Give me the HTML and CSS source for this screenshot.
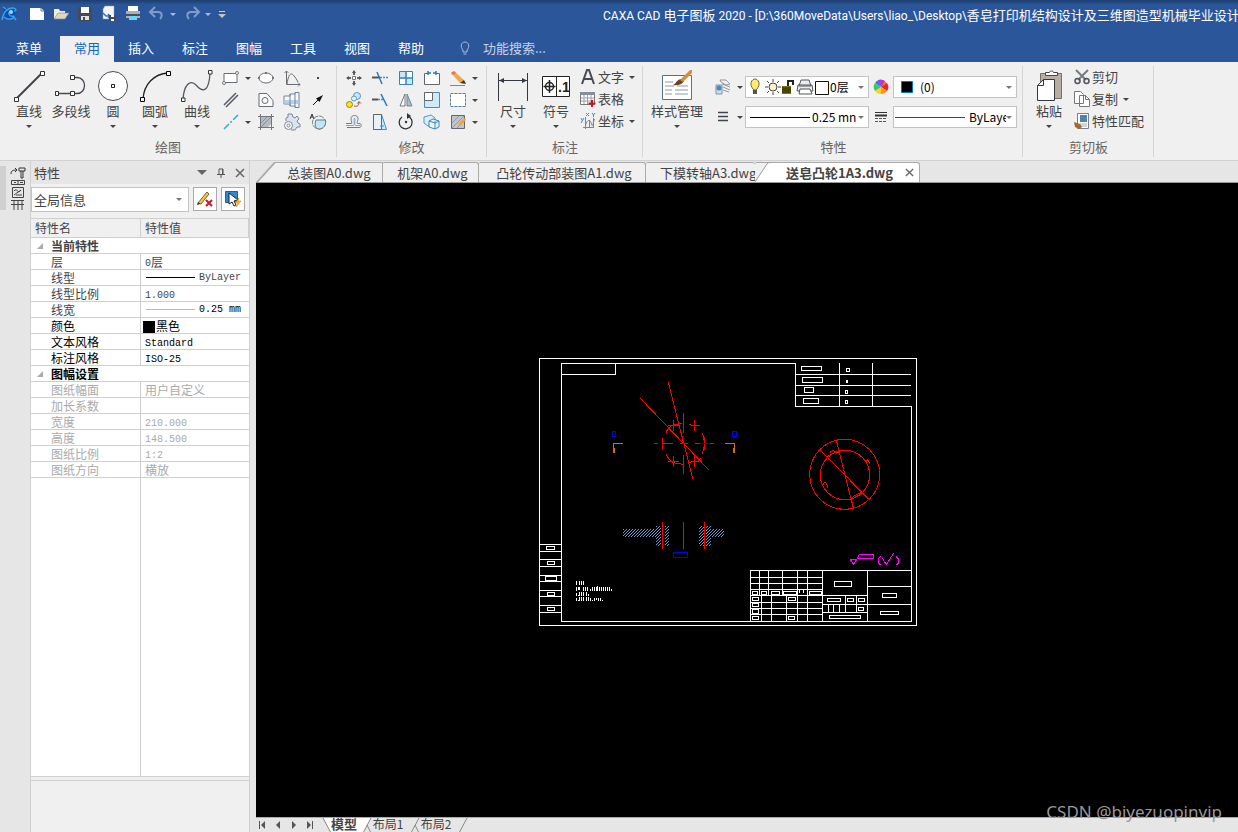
FILE: index.html
```html
<!DOCTYPE html>
<html lang="zh-CN">
<head>
<meta charset="utf-8">
<title>CAXA CAD 电子图板 2020</title>
<link rel="stylesheet" href="styles.css">
</head>
<body>
<div class="app">
<header class="titlebar">
  <div class="quick">
    <svg class="logo" viewBox="0 0 18 18"><path d="M2 2l5 2 8-2-1 8-4 4-6-1z" fill="#0b4fa8"/><path d="M1 15c1-6 4-12 11-12 3 0 4 3 1 3M5 4l-3-2M8 7c-1 3 2 5 5 4M3 12c3 3 8 3 10 0l2 3" fill="none" stroke="#35a2f2" stroke-width="1.500"/><circle cx="10" cy="7" r="2" fill="#9bdcff"/></svg>
    <button aria-label="新建"><svg viewBox="0 0 18 18"><path d="M2 3h11l3 3v9H2z" fill="#fff"/><path d="M13 3v3h3" fill="none" stroke="#777"/></svg></button>
    <button aria-label="打开"><svg viewBox="0 0 18 18"><path d="M2 14V4h5l1 2h5v2" fill="#f3efe6"/><path d="M2 14l4-6h11l-4 6z" fill="#ddd5c5" stroke="#8b8779" stroke-width=".6"/></svg></button>
    <button aria-label="保存"><svg viewBox="0 0 18 18"><path d="M2 2h14v14H3l-1-1z" fill="#444b56"/><path d="M5 2h8v6H5z" fill="#fff"/><path d="M5 11h8v4H5z" fill="#dfe3e8"/><path d="M7 12h2v3H7z" fill="#444b56"/></svg></button>
    <button aria-label="另存为"><svg viewBox="0 0 18 18"><path d="M5 1h9v13H3V4z" fill="#f5f5f5" stroke="#999" stroke-width=".5"/><path d="M3 8l3 3 4 0M8 9l2 2-2 2" fill="none" stroke="#2878c4" stroke-width="1.500"/><path d="M9 10h7v6H9z" fill="#444b56"/><path d="M11 10h3v2h-3zM11 14h3v2h-3z" fill="#fff"/></svg></button>
    <button aria-label="打印"><svg viewBox="0 0 18 18"><path d="M4 1h10v6H4z" fill="#fff"/><path d="M2 6h14v7H2z" fill="#aab0b6"/><path d="M2 9h14v2H2z" fill="#4a5058"/><path d="M5 11h8v4H5z" fill="#6bd5f5"/></svg></button>
    <button aria-label="撤销"><svg viewBox="0 0 18 18"><path d="M3 7h7c4 0 5 4 2 7M7 2L2 7l5 5" fill="none" stroke="#7f9cc8" stroke-width="2"/></svg></button><i class="caret light"></i>
    <button aria-label="重做"><svg viewBox="0 0 18 18"><path d="M15 7H8c-4 0-5 4-2 7M11 2l5 5-5 5" fill="none" stroke="#7f9cc8" stroke-width="2"/></svg></button><i class="caret light"></i>
    <button class="more" aria-label="自定义"><svg viewBox="0 0 8 10"><path d="M1 2.500h6" stroke="#ccd5e6"/><path d="M0 5h8L4 9z" fill="#c8c4bd"/></svg></button>
  </div>
  <h1 class="title">CAXA CAD <span>电子图板</span> 2020 - [D:\360MoveData\Users\liao_\Desktop\<span>香皂打印机结构设计及三维图造型机械毕业设计</span>C</h1>
</header>
<nav class="menu">
  <button class="file">菜单</button>
  <button class="on">常用</button><button>插入</button><button>标注</button><button>图幅</button><button>工具</button><button>视图</button><button>帮助</button>
  <label class="search"><svg width="10" height="14" viewBox="0 0 10 14"><path d="M3 9C0 6 1 1 5 1s5 5 2 8v2H3zM3.500 13h3" fill="none" stroke="#a9bddd"/></svg><input type="text" placeholder="功能搜索..." aria-label="功能搜索"></label>
</nav>

<section class="ribbon">
  <div class="group draw">
    <div class="tools">
      <button class="big"><svg viewBox="0 0 32 32"><path d="M4 28L28 4" stroke="#3f444e" stroke-width="2"/><g fill="#fff" stroke="#333"><path d="M1.500 27.500h4v4h-4zM27.500 1.500h4v4h-4z"/></g></svg><span>直线</span><i class="caret"></i></button>
      <button class="big"><svg viewBox="0 0 32 32"><path d="M2 23.500h16M18 7.500h4c10 0 10 16 0 16h-4" fill="none" stroke="#454a54" stroke-width="1.300"/><g fill="#fff" stroke="#333"><path d="M.5 21.500h3v4h-3zM15.500 21.500h4v4h-4zM15.500 5.500h4v4h-4z"/></g></svg><span>多段线</span></button>
      <button class="big"><svg viewBox="0 0 32 32"><circle cx="16" cy="16" r="14.500" fill="#fff" stroke="#454a54"/><path d="M14.500 14.500h3v3h-3z" fill="none" stroke="#222"/></svg><span>圆</span><i class="caret"></i></button>
      <button class="big"><svg viewBox="0 0 32 32"><path d="M4 29C5 14 15 4 29 3" fill="none" stroke="#222" stroke-width="1.300"/><g fill="#fff" stroke="#000"><path d="M1.500 27.500h4v4h-4zM27.500 1.500h4v4h-4z"/></g></svg><span>圆弧</span><i class="caret"></i></button>
      <button class="big"><svg viewBox="0 0 32 32"><path d="M2 29C3 15 9 9 15 15 22 23 28 22 29 3" fill="none" stroke="#555a64" stroke-width="1.300"/><g fill="#fff" stroke="#333"><path d="M.5 28h3.500v3.500H.5zM27.500.5h3.500V4h-3.500z"/></g></svg><span>曲线</span><i class="caret"></i></button>
      <div class="grid four">
        <button aria-label="矩形"><svg viewBox="0 0 18 18"><path d="M2 4.500h13v9H2z" fill="#fff" stroke="#686d76"/><circle cx="2" cy="14" r="1.500" fill="#fff" stroke="#777"/><circle cx="15" cy="4" r="1.500" fill="#fff" stroke="#777"/></svg><i class="caret"></i></button>
        <button aria-label="椭圆"><svg viewBox="0 0 18 18"><ellipse cx="9" cy="9" rx="7" ry="5" fill="#fff" stroke="#686d76"/><path d="M1 8h2v2H1zM15 8h2v2h-2zM8 3h2v2H8z" fill="#777"/></svg></button>
        <button aria-label="公式曲线"><svg viewBox="0 0 18 18"><path d="M3.500 2v13.500H17M4 15C6 2 9 2 15 13" fill="none" stroke="#686d76"/><path d="M1.500 4l2-2 2 2M15 13.500l2 2-2 2" fill="none" stroke="#777"/></svg></button>
        <button aria-label="点"><svg viewBox="0 0 18 18"><path d="M8 8h2v2H8z" fill="#444"/></svg></button>
        <button aria-label="平行线"><svg viewBox="0 0 18 18"><path d="M2 14L14 2M4 16L16 4" stroke="#555b66" stroke-width="1.500"/></svg></button>
        <button aria-label="轮廓"><svg viewBox="0 0 18 18"><path d="M2 2.500h8l6 7v6H2z" fill="#fafafa" stroke="#686d76"/><circle cx="8" cy="9.500" r="3" fill="none" stroke="#686d76"/></svg></button>
        <button aria-label="孔轴"><svg viewBox="0 0 18 18"><path d="M1 5h6V3h5V1.500h4v15h-4V15H7v-2H1z" fill="#f6f8fb" stroke="#74849a"/><path d="M1 9h15v4H1z" fill="#a8c7e8" opacity=".8"/><path d="M7 3v12M12 2v14" stroke="#74849a"/></svg></button>
        <button aria-label="箭头"><svg viewBox="0 0 18 18"><path d="M4 14l7-7" stroke="#111"/><path d="M14 4L7 7.500 10.500 11z" fill="#111"/></svg></button>
        <button aria-label="中心线"><svg viewBox="0 0 18 18"><path d="M2 16L16 2" stroke="#32a7de" stroke-width="1.500" stroke-dasharray="7 2 2 2"/></svg><i class="caret"></i></button>
        <button aria-label="剖面线"><svg viewBox="0 0 18 18"><path d="M4 4h10v7l-3 3H4z" fill="#b5bac2"/><path d="M3.500 1v16M14.500 1v16M1 3.500h16M1 14.500h16" stroke="#70757e"/><path d="M4 14l10-10M4 10l6-6" stroke="#777" stroke-width=".6"/></svg></button>
        <button aria-label="齿形"><svg viewBox="0 0 18 18"><path d="M3 8V5l2-1V1h4l1 3 2 1 2-2 2 3-2 2 1 2 2 1v3h-3l-2 3h-4" fill="#dde3ed" stroke="#7d8799"/><circle cx="5.500" cy="12.500" r="4" fill="#f8f8f8" stroke="#7d8799"/><circle cx="5.500" cy="12.500" r="1.500" fill="none" stroke="#7d8799"/></svg></button>
        <button aria-label="局部放大"><svg viewBox="0 0 18 18"><circle cx="10" cy="9.500" r="6.500" fill="none" stroke="#6d7884" stroke-dasharray="5 1"/><path d="M7 7h9.500c1 5-2 9-6.500 9-3 0-5-4-3-9z" fill="#bce6fb" stroke="#6d7884"/><path d="M0 6h5V0H0z" fill="#f0f0f0"/><path d="M1 6l2-5 2 5M2 4h2" fill="none" stroke="#333"/></svg></button>
      </div>
    </div>
    <div class="caption">绘图</div>
  </div>

  <div class="group edit">
    <div class="tools"><div class="grid five">
      <button aria-label="平移"><svg viewBox="0 0 18 18"><path d="M9 2v4M9 12v4M2 9h4M12 9h4" stroke="#333" stroke-width="1.500"/><path d="M7 4l2-3 2 3zM7 14l2 3 2-3zM4 7L1 9l3 2zM14 7l3 2-3 2z" fill="#555"/><path d="M7.500 7.500h3v3h-3z" fill="#fff" stroke="#777"/></svg></button>
      <button aria-label="裁剪"><svg viewBox="0 0 18 18"><path d="M1 8.500h8" stroke="#555" stroke-width="2"/><path d="M9 8.500h8" stroke="#3695d8" stroke-width="1.500" stroke-dasharray="2 1"/><path d="M6 3l5 12" stroke="#267abe" stroke-width="1.500"/></svg></button>
      <button aria-label="阵列"><svg viewBox="0 0 18 18"><path d="M2.500 2.500h13v13h-13z" fill="#c6e7fa" stroke="#3b82b5"/><path d="M3 10h6v5H3zM10 3h5v6h-5z" fill="#fff"/><path d="M9 2v14M2 9h14" stroke="#3b82b5" stroke-width="1.500"/></svg></button>
      <button aria-label="打断"><svg viewBox="0 0 18 18"><path d="M5 4.500H1.500v11h15v-11H13" fill="#fff" stroke="#60656e"/><path d="M5 2v4M13 2v4M5 4h3M13 4h-3" stroke="#267abe" stroke-width="1.500"/></svg></button>
      <button aria-label="删除"><svg viewBox="0 0 18 18"><path d="M2 4l3-2 10 9-4 3z" fill="#f0a947"/><path d="M2 4l3-2 2 2-3 2z" fill="#e97162"/><path d="M11 14l4-3 2 4z" fill="#333"/><path d="M1 16.500h15" stroke="#888"/></svg><i class="caret"></i></button>
      <button aria-label="平移复制"><svg viewBox="0 0 18 18"><circle cx="4.500" cy="13.500" r="3" fill="#ffe900" stroke="#90831b"/><circle cx="12" cy="5" r="3.500" fill="#c9e8fb" stroke="#5598ca"/><circle cx="9" cy="7.500" r="2.500" fill="#e5f4fd" stroke="#5598ca"/><path d="M9 15c4 1 5-1 5-4M12.500 12.500l1.500-2 2 2" fill="none" stroke="#9e4a40"/></svg></button>
      <button aria-label="延伸"><svg viewBox="0 0 18 18"><path d="M1 8.500h6" stroke="#555" stroke-width="2"/><path d="M7 8.500h5" stroke="#3695d8" stroke-width="1.500" stroke-dasharray="2 1"/><path d="M10 3l6 12" stroke="#267abe" stroke-width="1.500"/></svg></button>
      <button aria-label="镜像"><svg viewBox="0 0 18 18"><path d="M8 3v12H3z" fill="#fff" stroke="#777"/><path d="M10 3v12h5z" fill="#a5bdcf" stroke="#6f8798"/></svg></button>
      <button aria-label="缩放"><svg viewBox="0 0 18 18"><path d="M1.500 1.500h15v15h-15z" fill="#cceafa" stroke="#5688ad"/><path d="M1.500 1.500h8v8h-8z" fill="#fff" stroke="#666"/></svg></button>
      <button aria-label="选择"><svg viewBox="0 0 18 18"><path d="M1.500 2.500h15v13h-15z" fill="#fff" stroke="#557f9d" stroke-dasharray="3 1"/></svg><i class="caret"></i></button>
      <button aria-label="等距线"><svg viewBox="0 0 18 18"><path d="M1 10.500h5c2 0 0-2 0-5 0-4 7-4 7 0 0 3-2 5 0 5h1c3 0 3 4 0 4H2" fill="none" stroke="#747982"/><path d="M1 12.500h7c2 0 1-4 1-7h1c0 3-1 7 1 7h4" fill="none" stroke="#7ca9c7"/></svg></button>
      <button aria-label="拉伸"><svg viewBox="0 0 18 18"><path d="M2.500 1.500h8l5 15h-13z" fill="#c9e9fb" stroke="#3b91cf"/><path d="M10.500 16.500h-8v-15h8z" fill="#e8f1f7" stroke="#666"/><path d="M9 13h4" stroke="#3b91cf"/></svg></button>
      <button aria-label="旋转"><svg viewBox="0 0 18 18"><path d="M10 3A6.500 6.500 0 1 1 5 4" fill="none" stroke="#30343b" stroke-width="1.300"/><path d="M10 0v6l4-3z" fill="#30343b"/><circle cx="9" cy="9" r="1.200" fill="#333"/></svg></button>
      <button aria-label="分解"><svg viewBox="0 0 18 18"><path d="M1 4l7-2 4 3v6l-7 2-4-3z" fill="#d8eefa" stroke="#529acb"/><path d="M6 8l4-2 6 2v6l-4 2-6-2zM6 8l6 2 4-2M12 10v6" fill="#e8f5fc" stroke="#3f87b9"/></svg></button>
      <button aria-label="编辑填充"><svg viewBox="0 0 18 18"><path d="M2.500 2.500h13v13h-13z" fill="#c2c4c9" stroke="#63676f"/><path d="M3 15L15 3M3 10l7-7M8 15l7-7" stroke="#888" stroke-width=".7"/><path d="M9 13l1-3 6-5 1 2-5 5z" fill="#eba43f"/></svg><i class="caret"></i></button>
    </div></div>
    <div class="caption">修改</div>
  </div>

  <div class="group note">
    <div class="tools">
      <button class="big"><svg viewBox="0 0 32 32"><path d="M1.500 3v28M30.500 3v28" stroke="#333842"/><path d="M2 10.500h28" stroke="#333842"/><path d="M2 10.500l5-2.500v5zM30 10.500L25 8v5z" fill="#333842"/></svg><span>尺寸</span><i class="caret"></i></button>
      <button class="big"><svg viewBox="0 0 32 32"><path d="M2.500 6.500h27v20h-27zM16.500 6.500v20" fill="#fff" stroke="#222"/><circle cx="9.500" cy="16.500" r="4" fill="none" stroke="#222" stroke-width="1.500"/><path d="M3.500 16.500h12M9.500 10v13" stroke="#222" stroke-width="1.500"/><text x="18" y="22" class="sym">.1</text></svg><span>符号</span><i class="caret"></i></button>
      <div class="list">
        <button><svg viewBox="0 0 18 18"><path d="M3 16L8 2h2l5 14M5 11h8" fill="none" stroke="#454a54" stroke-width="2"/></svg>文字<i class="caret"></i></button>
        <button><svg viewBox="0 0 18 18"><path d="M1.500 2.500h14v12h-14z" fill="#fff" stroke="#777"/><path d="M1 2h15v3H1z" fill="#888e98"/><path d="M5 5v9M8.500 5v9M12 5v9M2 8h13M2 11h13" stroke="#9a9faa"/><path d="M13 10v7M9.500 13.500h7" stroke="#c1172a" stroke-width="2"/></svg>表格</button>
        <button><svg viewBox="0 0 18 18"><path d="M6.500 5v12M4 15.500h11M6.500 13c2-6 5-6 6-1s2-3 3-5M10.500 8v8M14.500 6v10" fill="none" stroke="#7c8590"/><path d="M2 6l1.500 3M5 6l-3 5M7 1l3 3M10 1L7 4M13 1l1.500 2L16 1M14.500 3v2" fill="none" stroke="#3b91cf"/></svg>坐标<i class="caret"></i></button>
      </div>
    </div>
    <div class="caption">标注</div>
  </div>

  <div class="group props">
    <div class="tools">
      <button class="big wide"><svg viewBox="0 0 32 32"><path d="M1.500 5.500h29v24h-29z" fill="#fff" stroke="#587189"/><path d="M4 12h8M4 16h9M4 20h7M4 24h7M16 16h11M14 20h13M14 24h13" stroke="#879cac"/><path d="M12 15c3-1 3-5 8-6l3 2c-2 4-7 5-11 4z" fill="#6d4526"/><path d="M19 10L29 0h2v3l-9 9z" fill="#d88c3d"/></svg><span>样式管理</span><i class="caret"></i></button>
      <div class="fields">
        <button aria-label="图层"><svg viewBox="0 0 18 18"><path d="M6 2h6l4 4-4 1-5-3zM8 6l8 3M9 9l7 3M9 12l6 2" fill="#eef0f3" stroke="#9299a3"/><path d="M2 7h6v9H2z" fill="#ccdfea" stroke="#82909d"/><circle cx="5" cy="10" r="2.500" fill="#448bbb"/></svg><i class="caret"></i></button>
        <div class="combo">
          <svg class="layer" viewBox="0 0 80 18"><path d="M4 12c-6-6-2-11 1-11s7 5 1 11z" fill="#ffea75" stroke="#776629"/><path d="M3 12h4v4H3z" fill="#555"/><circle cx="23" cy="9" r="4" fill="#fff4c9" stroke="#444"/><path d="M23 1v3M23 14v3M15 9h3M28 9h3M17 3l2 2M27 13l2 2M17 15l2-2M27 5l2-2" stroke="#444"/><path d="M32 8h9v8h-9z" fill="#7b7b00"/><path d="M32 10h9M32 12h9M32 14h9" stroke="#111"/><path d="M38 8V3h5v4" fill="none" stroke="#222" stroke-width="2"/><path d="M51 2h8l2 6H49zM48 7h14l1 6H47z" fill="#e8edf2" stroke="#555"/><path d="M50 11h10l2 5H49z" fill="#fff" stroke="#555"/><path d="M65.500 3.500h13v13h-13z" fill="#fff" stroke="#111"/></svg>
          <select aria-label="当前图层"><option>0层</option></select><i class="caret"></i></div>
        <svg class="wheel" viewBox="0 0 18 18"><path d="M9 9V2a7 7 0 0 1 6 4z" fill="#f47a2d"/><path d="M9 9l6-4a7 7 0 0 1 0 8z" fill="#ee2525"/><path d="M9 9l6 4a7 7 0 0 1-6 3z" fill="#ff9a21"/><path d="M9 9v7a7 7 0 0 1-6-3z" fill="#ffcf2d"/><path d="M9 9l-6 4a7 7 0 0 1 0-8z" fill="#42c767"/><path d="M9 9L3 5a7 7 0 0 1 4-3z" fill="#3a7de9"/><path d="M9 9L6 2a7 7 0 0 1 7 1z" fill="#b735e1"/></svg>
        <div class="combo"><svg class="chip" viewBox="0 0 12 12"><path d="M.5.5h11v11H.5z" fill="#000" stroke="#0078d7"/></svg><select aria-label="颜色"><option>(0)</option></select><i class="caret"></i></div>
        <button aria-label="线宽设置"><svg viewBox="0 0 18 18"><path d="M4 4.500h10M4 8.500h10M4 12.500h10" stroke="#3f444e" stroke-width="1.500"/></svg><i class="caret"></i></button>
        <div class="combo"><span class="stroke"></span><select aria-label="线宽"><option>0.25 mn</option></select><i class="caret"></i></div>
        <svg class="wheel" viewBox="0 0 18 18"><path d="M3 4.500h12" stroke="#333"/><path d="M3 7.500h12" stroke="#333" stroke-width="2"/><path d="M3 10.500h12M3 13.500h12" stroke="#555" stroke-dasharray="3 1"/></svg>
        <div class="combo"><span class="stroke crimson"></span><select aria-label="线型"><option>ByLaye</option></select><i class="caret"></i></div>
      </div>
    </div>
    <div class="caption">特性</div>
  </div>

  <div class="group clip">
    <div class="tools">
      <button class="big"><svg viewBox="0 0 32 32"><path d="M7.500 3.500h21v25h-21z" fill="#b7ae9f" stroke="#777064"/><path d="M12.500 5.500v-3h4c0-2 4-2 4 0h4v3z" fill="#fff" stroke="#3f444e"/><path d="M10.500 9.500h11v21h-17v-15z" fill="#fff" stroke="#333842"/><path d="M10.500 9.500v6h-6" fill="none" stroke="#333842"/></svg><span>粘贴</span><i class="caret"></i></button>
      <div class="list">
        <button><svg viewBox="0 0 18 18"><path d="M3 2l10 10M15 2L5 12" stroke="#777c84" stroke-width="2"/><circle cx="4.500" cy="13" r="2.500" fill="none" stroke="#50555d" stroke-width="1.500"/><circle cx="13.500" cy="13" r="2.500" fill="none" stroke="#50555d" stroke-width="1.500"/></svg>剪切</button>
        <button><svg viewBox="0 0 18 18"><path d="M1.500 1.500h6l3 3v9h-9zM6.500 5.500h6l4 4v7h-10z" fill="#fff" stroke="#777"/><path d="M12.500 5.500v4h4" fill="none" stroke="#777"/></svg>复制<i class="caret"></i></button>
        <button><svg viewBox="0 0 18 18"><path d="M4.500 1.500h11v15h-11z" fill="#fff" stroke="#77818c"/><path d="M7 3h7v7H7z" fill="#4e85b0"/><path d="M7 12h7M7 14h7" stroke="#aaa"/><path d="M1 10l6 2 2 3-3 2-4-2z" fill="#a8652d"/></svg>特性匹配</button>
      </div>
    </div>
    <div class="caption">剪切板</div>
  </div>
</section>

<main class="work">
  <aside class="dock"><button aria-label="图库"><svg viewBox="0 0 16 46"><path d="M1 8c0-4 3-4 6-4M5 2l2 2-2 2M9 2h6v3H9zM11 5v7h2V5" fill="none" stroke="#333"/><path d="M1.500 14.500h13v4h-13zM4 16.500h2M8 15v3M10 16.500h3M2.500 21.500h11v10h-11zM4 25c3-4 4 4 7-1M4 29l7-5M6 29h6M1 34.500h13M1 38.500h13M4 34v10M8 34v10M12 34v10" fill="none" stroke="#444"/></svg></button></aside>
  <aside class="panel">
    <div class="phead"><h2>特性</h2><button aria-label="选项"><i class="caret large"></i></button><button aria-label="固定"><svg viewBox="0 0 10 10"><path d="M3 1h4v5M3 1v5M1 6.500h8M5 7v3M6.500 1v5" fill="none" stroke="#555"/></svg></button><button aria-label="关闭"><svg viewBox="0 0 10 10"><path d="M1 1l8 8M9 1L1 9" stroke="#666" stroke-width="1.500"/></svg></button></div>
    <div class="pick">
      <div class="combo"><select aria-label="对象"><option>全局信息</option></select><i class="caret"></i></div>
      <button aria-label="清除选择"><svg viewBox="0 0 18 18"><path d="M2 13L11 2l2 2L5 14z" fill="#f1c645" stroke="#7b6225"/><path d="M1 15l1-3 2 2z" fill="#222"/><path d="M10 10l6 6M16 10l-6 6" stroke="#cb1729" stroke-width="2"/></svg></button>
      <button aria-label="快速选择"><svg viewBox="0 0 18 18"><path d="M1.500 1.500h12v11h-12z" fill="#2f86d3" stroke="#17649e"/><path d="M5 3v11l3-2 2 4 2-1-2-4 4-1z" fill="#fff" stroke="#222"/><path d="M15 8l-4 5h3l-2 4 5-6h-3z" fill="#ffba20" stroke="#ce7a00" stroke-width=".5"/></svg></button>
    </div>
    <div class="sheet">
      <table>
        <thead><tr><th scope="col">特性名</th><th scope="col">特性值</th></tr></thead>
        <tbody>
          <tr class="sec"><td colspan="2"><i></i>当前特性</td></tr>
          <tr><td>层</td><td><b>0</b>层</td></tr>
          <tr><td>线型</td><td><div class="line"><span></span><b>ByLayer</b></div></td></tr>
          <tr><td>线型比例</td><td><b>1.000</b></td></tr>
          <tr><td>线宽</td><td class="dark"><div class="line pale"><span></span><b>0.25 mm</b></div></td></tr>
          <tr class="dark"><td>颜色</td><td class="swatch"><i></i>黑色</td></tr>
          <tr class="dark"><td>文本风格</td><td><b>Standard</b></td></tr>
          <tr class="dark"><td>标注风格</td><td><b>ISO-25</b></td></tr>
          <tr class="sec dark"><td colspan="2"><i></i>图幅设置</td></tr>
          <tr class="off"><td>图纸幅面</td><td>用户自定义</td></tr>
          <tr class="off"><td>加长系数</td><td></td></tr>
          <tr class="off"><td>宽度</td><td><b>210.000</b></td></tr>
          <tr class="off"><td>高度</td><td><b>148.500</b></td></tr>
          <tr class="off"><td>图纸比例</td><td><b>1:2</b></td></tr>
          <tr class="off"><td>图纸方向</td><td>横放</td></tr>
        </tbody>
      </table>
    </div>
    <div class="desc"></div>
  </aside>

  <section class="docs">
    <div class="doctabs">
      <button class="t1">总装图A0.dwg</button><button class="t2">机架A0.dwg</button><button class="t3">凸轮传动部装图A1.dwg</button><button class="t4">下模转轴A3.dwg</button>
      <button class="cur"><svg class="slant" viewBox="0 0 16 20"><path d="M0 20L12 2q1-2 3-2h1v20z" fill="#fff"/><path d="M0 20L12 2q1-1.500 3-1.500h1" fill="none" stroke="#999"/></svg><span>送皂凸轮1A3.dwg</span><svg class="x" viewBox="0 0 10 10"><path d="M1 1l8 8M9 1L1 9" stroke="#666" stroke-width="1.500"/></svg></button>
    </div>
    <div class="canvas">
      <svg class="sheetdraw" viewBox="0 0 1134 804">
        <defs><pattern id="hatch" width="9" height="9" patternUnits="userSpaceOnUse"><path d="M0 6h3v3H0zM3 3h3v3H3zM6 0h3v3H6z" fill="#6d98d0"/></pattern></defs>
        <g transform="translate(-12 -12)" class="ln">
          <path d="M13 13H1145V814H13z"/>
          <path d="M780 28H79V802H1130M79 61H241V28M13 571H79M13 592H79M13 616H79M13 637H79M13 664H79M13 682H79M13 709H79M13 727H79M13 754H79M13 775H79"/>
          <path d="M34 577H59V586H34zM37 622H59V631H37zM31 667H65V679H31zM37 715H59V724H37zM37 760H59V769H37z"/>
          <path d="M124 681v12M133 681v12M139 681v12M145 681v12M124 699v12M130 709v-10h4v10M145 699v12M151 699v12M157 699v12M166 706v5M172 699v12M178 699v12M184 699v12M187 696v15M193 699v12M199 699v12M205 699v12M211 699v12M217 699v12M223 699v12M229 705v6M124 717v9M130 724h4v-10M139 714v12M145 714v12M154 714v12M160 720v6M124 732v9M130 739h4v-10M139 729v12M145 729v12M154 729v12M160 729v12M166 732v9M172 738v3M178 732v9M184 738v-6M190 732v9M196 732v9M202 737v4"/>
          <g class="red">
            <path d="M316 133L521 347M400 85L473 374M445 178V236M445 304V359M357 268H368M381 268H413M435 268H458M480 268H495M525 268H537M382 252V285M508 250V287"/>
            <path d="M393 236q7-18 22-23l15-3 12-3M393 300q11 24 28 27l23 4M502 237q12 31 0 62M415 198V231M400 213H434M479 198V231M463 210l7 5h24M415 306V339M400 322H432M479 306V339M460 327l14-5h16l6-9"/>
            <path d="M382 504V584M445 504V584M508 504V584"/>
          </g>
          <path class="blue" d="M232 232H242V247H232zM592 232H604V247H592zM495 268H525M415 595H458V611H415z"/>
          <path class="orange" d="M264 268H235V296M238 283V296M570 268H598V296M595 283V296"/>
          <path class="hatch" d="M264 525H363V516H378V575H363V549H264zM390 516H402V575H390zM492 516H507V575H492zM513 516H528V525H567V549H528V575H513z"/>
        </g>
        <g transform="translate(573 -12)" class="ln">
          <path d="M196 28V157H545V802M328 28V157M427 28V157M196 61H543M196 94H543M196 124H543"/>
          <path d="M214 37H275V49H214zM217 70H278V86H217zM223 100H251V116H223zM220 133H266V149H220zM349 43H359V53H349zM349 79H352V86H349zM346 109H353V119H346zM346 139H353V149H346z"/>
          <path d="M61 802V649H545M61 670H278M61 688H278M61 706H278M61 724H412M61 745H278M61 763H278M61 781H278M88 649V724M115 649V724M157 649V724M202 649V802M232 649V802M94 724V802M124 724V802M169 724V802M278 649V802M412 649V802M412 697H545M412 751H545M278 751H412M278 775H412M346 724V775M379 724V775M295 751V775M310 751V775M328 751V775M208 708V717M221 708V717"/>
          <path d="M313 682H365V697H313zM457 718H500V730H457zM451 772H506V781H451zM292 733H332V742H292zM352 733H370V742H352zM385 733H404V742H385zM385 760H401V769H385zM298 784H392V794H298zM67 712H83V721H67zM94 712H110V721H94zM124 712H149V721H124zM160 712H200V721H160zM238 712H275V721H238zM67 731H86V740H67zM175 731H197V740H175zM67 748H86V757H67zM67 767H86V779H67zM67 787H86V796H67zM175 787H194V796H175z"/>
          <g class="red"><circle cx="344" cy="361" r="105"/><circle cx="345" cy="363" r="74"/><path d="M270 287L418 438M319 260L371 465M289 309l12-6M299 296l10-7 8 5h12M407 323l7-6 7 14M281 393q-1-13 9-4l3 13M363 435q6-8 15-12l17-9M372 430l17-7"/></g>
          <path class="pink" d="M361 616H380L371 632zM380 616L388 601H431V613H383M452 606L446 613V628L452 634M457 612L469 632L492 596M499 608L506 615V627L499 634"/>
          <path class="blue" d="M7 232H20V247H7z"/>
        </g>
      </svg>
    </div>
    <div class="layouts">
      <button aria-label="第一个"><svg viewBox="0 0 10 10"><path d="M2.500 1v8" stroke="#555"/><path d="M8 1v8L4 5z" fill="#555"/></svg></button>
      <button aria-label="上一个"><svg viewBox="0 0 10 10"><path d="M7 1v8L3 5z" fill="#555"/></svg></button>
      <button aria-label="下一个"><svg viewBox="0 0 10 10"><path d="M3 1v8l4-4z" fill="#555"/></svg></button>
      <button aria-label="最后一个"><svg viewBox="0 0 10 10"><path d="M7.500 1v8" stroke="#555"/><path d="M2 1v8l4-4z" fill="#555"/></svg></button>
      <div class="ltabs"><svg class="edges" viewBox="0 0 150 15"><path d="M2 0h48l-8 15H10z" fill="#fff"/><path d="M2 0l8 15M50 0l-8 15M46 7l4 8M98 0l-8 15M94 7l4 8M146 0l-8 15" fill="none" stroke="#888"/></svg><button class="act">模型</button><button>布局1</button><button>布局2</button></div>
    </div>
  </section>
</main>
<div class="mark">CSDN @biyezuopinvip</div>
</div>
</body>
</html>
```
FILE: styles.css
```css
* { box-sizing: border-box; }
body { margin: 0; font: 13px/18px "Noto Sans CJK SC", "Noto Sans", sans-serif; color: #444; background: #e6e6e6; }
button, input, select { font: inherit; color: inherit; border: 0; padding: 0; margin: 0; background: none; }
select { appearance: none; outline: 0; }
svg { display: block; flex: none; }
h1, h2 { margin: 0; font: inherit; }
.app { position: relative; display: flex; flex-direction: column; height: 100vh; overflow: hidden; }
.caret { flex: none; width: 0; height: 0; border: 3px solid transparent; border-top-color: #444; border-bottom: 0; }
.caret.light { border-top-color: #a9bbd8; }
.caret.large { border-width: 5px 5px 0; border-top-color: #666; }

.titlebar { display: flex; flex: none; align-items: center; height: 28px; color: #fff; background: linear-gradient(#1d3d6e, #2b579a 5px); overflow: hidden; }
.quick { display: flex; flex: none; align-items: center; width: 603px; padding-left: 1px; }
.quick svg { width: 18px; height: 18px; }
.quick button { width: 24px; padding-left: 3px; }
.quick .logo { margin-right: 6px; }
.quick .caret { margin: 0 4px 0 1px; }
.quick .more svg { width: 8px; height: 10px; }
.title { flex: none; white-space: nowrap; padding-top: 4px; font: 12px/18px Roboto, "Noto Sans CJK SC", sans-serif; }
.title span { font-size: 13px; }

.menu { display: flex; flex: none; align-items: flex-end; height: 35px; color: #fff; background: #2b579a; border-bottom: 1px solid #f4f0f0; }
.menu button { width: 54px; height: 26px; padding-bottom: 2px; }
.menu .file { width: 58px; margin-right: 2px; }
.menu .on { color: #1565c0; background: #f0f0f0; }
.search { display: flex; align-items: center; gap: 13px; height: 26px; padding: 0 0 2px 22px; color: #c5d3e8; }
.search input { width: 110px; outline: 0; }
.search input::placeholder { color: #c5d3e8; opacity: 1; }

.ribbon { display: flex; flex: none; height: 98px; padding-top: 3px; background: #f0f0f0; border-bottom: 1px solid #d2d2d2; }
.group { display: flex; flex-direction: column; flex: none; height: 91px; border-right: 1px solid #d5d5d5; }
.tools { display: flex; height: 72px; }
.caption { margin-right: 4px; text-align: center; color: #666; }
.draw { width: 337px; padding-left: 8px; }
.draw .caption { margin-right: 8px; }
.edit { width: 150px; padding-left: 4px; }
.note { width: 156px; padding-left: 5px; }
.props { width: 380px; padding-left: 6px; }
.clip { width: 131px; padding-left: 5px; }
.big { display: flex; flex: none; flex-direction: column; align-items: center; width: 42px; padding-top: 4px; white-space: nowrap; }
.big svg { width: 32px; height: 32px; }
.big .caret { margin-top: 5px; }
.wide { width: 56px; }
.sym { font: bold 14px "Liberation Sans", sans-serif; fill: #222; }
.grid { display: grid; grid-template-rows: repeat(3, 22px); padding-top: 1px; }
.four { grid-template-columns: 35px 26px 26px 26px; }
.five { grid-template-columns: repeat(4, 26px) 40px; }
.grid button { display: flex; align-items: center; padding-left: 4px; }
.grid svg, .list svg, .fields button svg, .wheel { width: 18px; height: 18px; }
.grid .caret { margin-left: 5px; }
.list { display: flex; flex-direction: column; padding: 0 0 0 3px; }
.note .list { padding-left: 2px; }
.note .big + .big { margin-left: 1px; }
.list button { display: flex; align-items: center; gap: 1px; height: 22px; white-space: nowrap; }
.list .caret { margin-left: 4px; }
.fields { display: grid; grid-template-columns: 31px 124px 24px 124px; grid-template-rows: 22px 22px; row-gap: 8px; align-items: center; padding: 10px 0 0 9px; }
.fields button { display: flex; align-items: center; gap: 5px; }
.wheel { justify-self: center; }
.combo { display: flex; align-items: center; height: 22px; padding: 0 4px; color: #000; background: #fff; border: 1px solid #c3c3c3; font-size: 12px; }
.combo select { flex: 1; min-width: 0; height: 18px; }
.combo .caret { border-top-color: #777; }
.layer { width: 80px; height: 18px; }
.chip { width: 12px; height: 12px; margin: 0 7px 0 3px; }
.stroke { flex: none; width: 60px; height: 1px; margin-right: 2px; background: #000; }
.crimson { width: 70px; margin: 0 4px 0 -3px; background: #e00000; }

.work { display: flex; flex: 1; min-height: 0; }
.dock { width: 30px; flex: none; padding-top: 5px; }
.dock button { width: 28px; height: 44px; padding-left: 4px; border-left: 6px solid #d0d0d0; }
.dock svg { width: 16px; height: 46px; }
.panel { display: flex; flex: none; flex-direction: column; width: 220px; margin-right: 6px; background: #f0f0f0; border: solid #d0d0d0; border-width: 0 1px; }
.phead { display: flex; flex: none; align-items: center; gap: 9px; height: 23px; padding-right: 4px; background: #e6e6e6; }
.phead h2 { flex: 1; padding-left: 3px; }
.phead button { display: flex; justify-content: center; width: 10px; }
.phead svg { width: 10px; height: 10px; }
.pick { display: flex; flex: none; gap: 4px; height: 34px; padding: 3px 4px 5px 0; }
.pick .combo { flex: 1; height: 25px; padding: 0 6px 0 2px; color: #444; font-size: 13px; }
.pick button { display: grid; place-items: center; width: 24px; height: 24px; background: #fff; border: 1px solid #aaa; }
.pick svg { width: 18px; height: 18px; }
.sheet { flex: 1; min-height: 0; margin-bottom: 3px; border: 1px solid #cfcfcf; border-width: 1px 0; background: linear-gradient(#cfcfcf, #cfcfcf) 109px 0 / 1px 100% no-repeat #fff; }
table { width: 100%; table-layout: fixed; border-collapse: separate; border-spacing: 0; font-size: 12px; line-height: 15px; }
th { height: 19px; padding: 0 0 1px 4px; font-weight: 400; text-align: left; background: #f0f0f0; border: solid #cfcfcf; border-width: 0 1px 1px 0; }
th:first-child { width: 110px; }
td { height: 16px; padding: 0 0 0 4px; border-bottom: 1px solid #cfcfcf; white-space: nowrap; }
td:first-child { padding-left: 20px; }
td b { font: 10px/1px "Liberation Mono", monospace; vertical-align: 1px; }
.sec td { position: relative; font-weight: 700; background: #fff; }
.sec i { position: absolute; left: 6px; top: 5px; border: 3px solid #aaa; border-top-color: transparent; border-left-color: transparent; }
.dark { color: #000; }
.off { color: #aaa; }
.line { display: flex; align-items: center; height: 15px; }
.line span { width: 49px; height: 1px; margin: 0 4px 0 1px; background: #000; }
.line.pale span { background: #bbb; }
.swatch i { display: inline-block; width: 12px; height: 12px; margin: 0 1px 0 -2px; vertical-align: -2px; background: #000; }
.desc { flex: none; height: 52px; border-top: 1px solid #cfcfcf; }

.docs { display: flex; flex: 1; flex-direction: column; min-width: 0; }
.doctabs { display: flex; flex: none; align-items: flex-end; height: 22px; border-bottom: 1px solid #999; }
.doctabs button { flex: none; height: 20px; background: #f0f0f0; border: solid #aaa; border-width: 1px 1px 0 0; border-radius: 2px 3px 0 0; white-space: nowrap; }
.doctabs .t1 { width: 127px; padding-left: 20px; border-radius: 0; clip-path: polygon(0 100%, 18px 0, 100% 0, 100% 100%); background: linear-gradient(132deg, #aaa 14px, #f0f0f0 15px); }
.doctabs .t2 { width: 96px; padding-left: 4px; }
.doctabs .t3 { width: 167px; padding-left: 4px; }
.doctabs .t4 { width: 109px; padding-left: 14px; border-right: 0; }
.doctabs .cur { display: flex; align-items: center; width: 165px; padding: 0 5px 0 0; background: linear-gradient(90deg, #f0f0f0 15px, #fff 15px); font-weight: 700; }
.cur .slant { width: 16px; height: 20px; margin: -1px 15px 0 0; }
.cur span { flex: 1; text-align: left; }
.cur .x { width: 9px; height: 9px; }
.canvas { flex: 1; min-height: 0; padding: 175px 0 0 283px; background: #000; overflow: hidden; }
.sheetdraw { width: 378px; height: 268px; overflow: visible; shape-rendering: crispEdges; }
.ln { fill: none; stroke: #fff; stroke-width: 3; }
.red { stroke: #f00; }
.blue { stroke: #00f; }
.orange { stroke: #d4700c; }
.pink { stroke: #f0f; }
.hatch { fill: url(#hatch); stroke: none; }
.layouts { display: flex; flex: none; align-items: center; gap: 6px; height: 15px; padding-left: 1px; border-top: 1px solid #aaa; }
.layouts > button svg { width: 10px; height: 10px; }
.ltabs { position: relative; display: flex; height: 14px; width: 150px; padding-left: 6px; }
.ltabs button { position: relative; display: flex; justify-content: center; width: 48px; height: 12px; line-height: 12px; font-size: 12px; white-space: nowrap; }
.ltabs .act { width: 34px; margin-right: 3px; font-size: 13px; font-weight: 700; }
.edges { position: absolute; left: 0; top: 0; width: 150px; height: 15px; }
.mark { position: absolute; right: 16px; bottom: 8px; font: 17px/24px "Noto Sans", sans-serif; color: #999; }
```
